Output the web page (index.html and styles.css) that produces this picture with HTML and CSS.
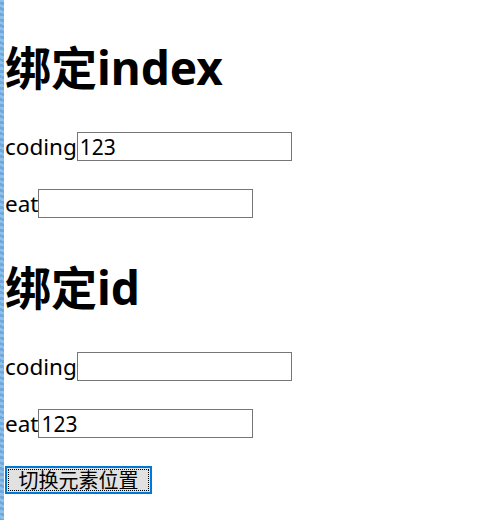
FILE: index.html
```html
<!DOCTYPE html>
<html>
<head>
<meta charset="utf-8">
<link rel="stylesheet" href="styles.css">
</head>
<body>
<div class="page">
  <h1 class="title title-first">绑定index</h1>
  <p class="row">coding<input class="field" type="text" value="123"></p>
  <p class="row">eat<input class="field" type="text" value=""></p>
  <h1 class="title">绑定id</h1>
  <p class="row">coding<input class="field" type="text" value=""></p>
  <p class="row">eat<input class="field" type="text" value="123"></p>
  <button class="btn"><span class="btn-inner">切换元素位置</span></button>
</div>
</body>
</html>
```
FILE: styles.css
```css
html, body {
  margin: 0;
  padding: 0;
  background: #ffffff;
}
body {
  font-family: "Noto Sans", "Noto Sans CJK SC", sans-serif;
  font-size: 22.5px;
  color: #000;
}
.page {
  min-height: 520px;
  box-sizing: border-box;
  border-left: 4px solid transparent;
  border-image: repeating-linear-gradient(45deg, #6fa8dc 0 2px, #8fc0ea 2px 4px) 1;
  padding: 0 0 0 1px;
  display: flow-root;
}
.title {
  font-family: "Noto Sans", "Noto Sans CJK SC", sans-serif;
  font-size: 46px;
  font-weight: bold;
  line-height: 60px;
  height: 60px;
  margin: 39px 0 35px 0;
}
.title-first {
  margin-top: 37px;
}
.row {
  margin: 0 0 28px 0;
  height: 29px;
  display: flex;
  align-items: center;
}
.field {
  width: 215px;
  height: 29px;
  box-sizing: border-box;
  border: 1px solid #767676;
  padding: 0 2px;
  font-family: "Noto Sans", "Noto Sans CJK SC", sans-serif;
  font-size: 21px;
  color: #000;
  outline: none;
}
.btn {
  width: 147px;
  height: 28px;
  box-sizing: border-box;
  border: 2px solid #0078d7;
  background: #e1e1e1;
  padding: 1px;
  font-family: "Noto Sans CJK SC", sans-serif;
  font-size: 20px;
  color: #000;
  display: flex;
}
.btn-inner {
  flex: 1;
  border: 1px dotted #000;
  display: flex;
  align-items: center;
  justify-content: center;
  line-height: 1;
}
```
